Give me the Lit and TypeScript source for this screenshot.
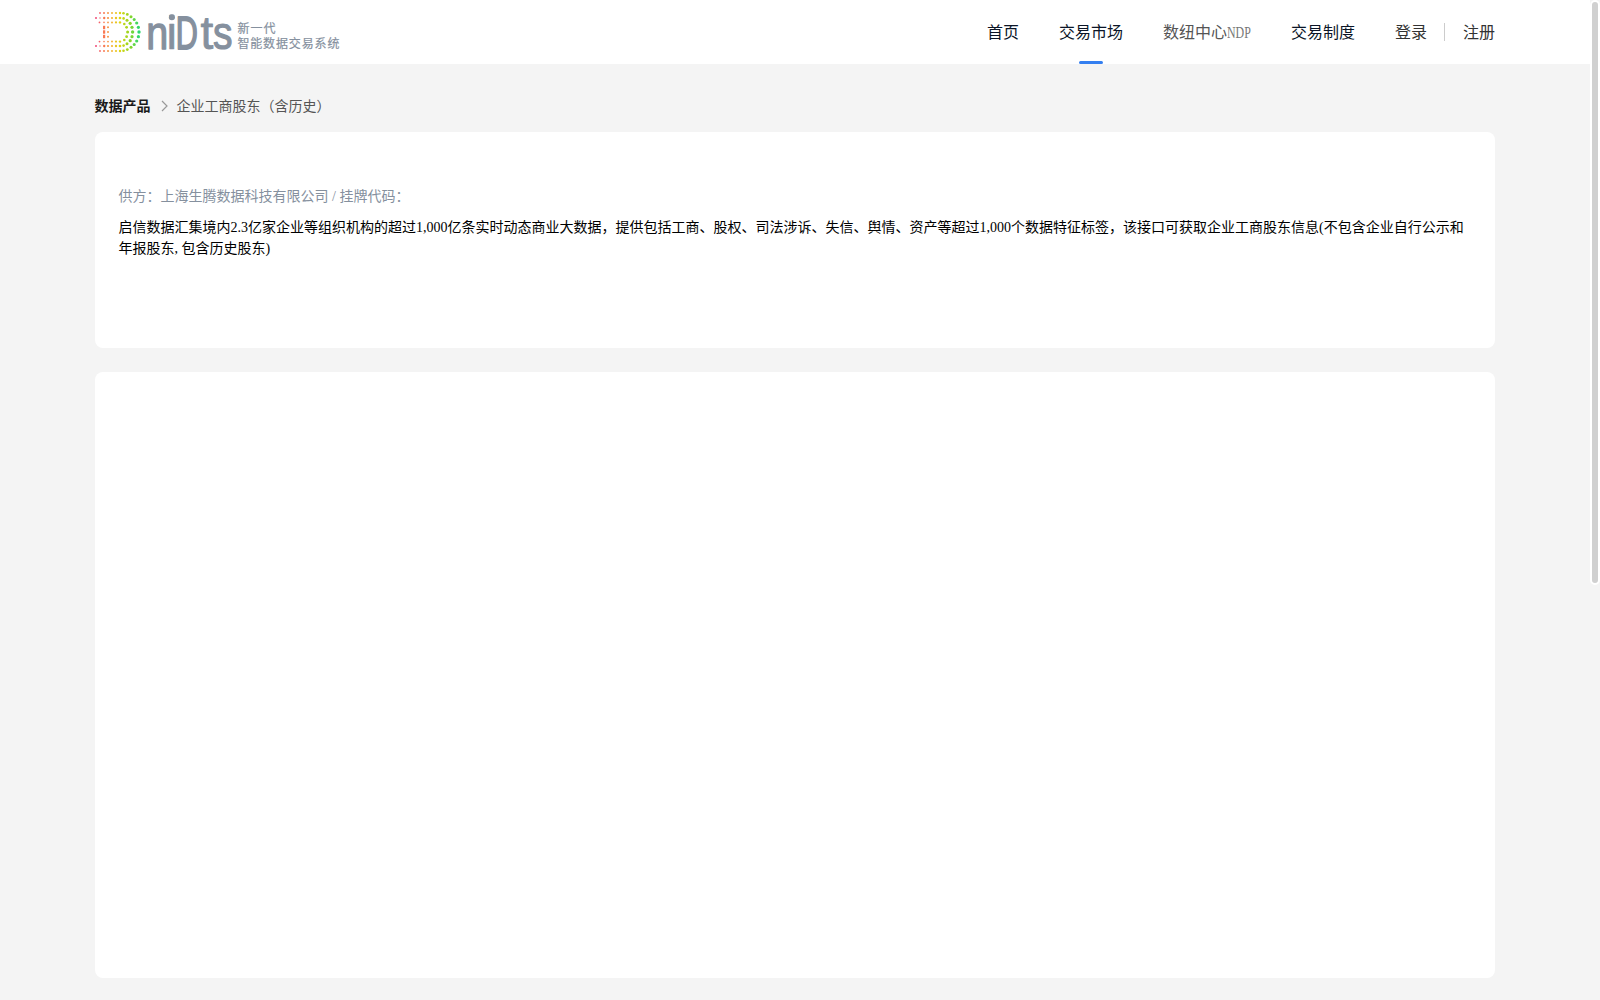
import { LitElement, html, css, svg } from "lit";
import { customElement } from "lit/decorators.js";

const STOPS: [number, number[]][] = [
  [0, [240, 70, 125]],
  [9, [248, 122, 85]],
  [17, [245, 180, 50]],
  [25, [222, 214, 20]],
  [34, [150, 214, 30]],
  [44, [45, 215, 110]],
];

function colorAt(x: number): string {
  for (let i = 1; i < STOPS.length; i++) {
    const [x1, c1] = STOPS[i];
    const [x0, c0] = STOPS[i - 1];
    if (x <= x1) {
      const t = Math.max(0, (x - x0) / (x1 - x0));
      return `rgb(${c0.map((c, k) => Math.round(c + (c1[k] - c) * t)).join(",")})`;
    }
  }
  return "rgb(45,215,110)";
}

// Upper half of the mark as [x, y, radius]; the lower half mirrors it about y = 20.
const UPPER: [number, number, number][] = [
  [5, 1, 0.9], [9, 1, 1], [13, 1, 1], [17, 1, 1], [21, 1, 1.1], [25, 1, 1.2], [28.5, 1.3, 1.3],
  [32.3, 2.4, 1.4], [36, 4.7, 1.5], [39.2, 7.4, 1.5], [41.7, 11, 1.6], [43.4, 15.3, 1.6],
  [1, 6, 1], [5, 6, 0.7], [9.2, 6, 1.2], [13, 6, 1.1], [17, 6, 1.1], [21, 6, 1.2], [25, 6, 1.3],
  [28.6, 6.4, 1.3], [32, 8.2, 1.5], [35.2, 11.3, 1.6], [37, 15.3, 1.6],
  [4.5, 10.4, 0.9], [9, 10.4, 0.8], [13, 10.4, 0.9], [17, 10.4, 1], [21, 10.4, 1.1], [25, 10.4, 1.2],
  [29.3, 12, 1.3], [31.6, 15.3, 1.4],
  [13, 15.3, 1],
];
const AXIS: [number, number, number][] = [[13, 20, 1], [32.6, 20, 1.5], [37.6, 20, 1.7], [44, 20, 1.7]];

function logoDots() {
  const all = [...UPPER, ...UPPER.map(([x, y, r]) => [x, 40 - y, r] as [number, number, number]), ...AXIS];
  return all.map(([x, y, r]) => svg`<circle cx=${x} cy=${y} r=${r} fill=${colorAt(x)}></circle>`);
}

// Letter, left edge, horizontal scale, stroke width.
const LETTERS: [string, number, number, number][] = [
  ["n", 51.3, 0.84, 1.3],
  ["i", 71.6, 1, 0.6],
  ["D", 80.8, 0.65, 1.8],
  ["t", 105.4, 0.98, 0.8],
  ["s", 118, 0.83, 1.2],
];

@customElement("site-logo")
export class SiteLogo extends LitElement {
  static styles = css`
    :host { display: block; width: 246px; height: 44px; }
    svg { display: block; overflow: visible; }
    .word { font: 47px "Liberation Sans", sans-serif; fill: #85909e; stroke: #85909e; stroke-linejoin: round; }
    .tag { font: 400 12px "Noto Sans CJK SC", sans-serif; fill: #85909e; stroke: #85909e; stroke-width: 0.2; }
  `;
  render() {
    return html`<svg width="246" height="44" viewBox="0 0 246 44">
      <g>
        ${logoDots()}
        <rect x="8" y="13.8" width="2.2" height="3.4" fill=${colorAt(9)}></rect>
        <rect x="8" y="18.3" width="2.2" height="3.4" fill=${colorAt(9)}></rect>
        <rect x="8" y="22.8" width="2.2" height="3.4" fill=${colorAt(9)}></rect>
      </g>
      <g class="word">
        ${LETTERS.map(([ch, x, sx, w]) => svg`<text transform="translate(${x} 37.3) scale(${sx} 1)" stroke-width=${w}>${ch}</text>`)}
        <circle cx="76.9" cy="5.3" r="3" stroke="none"></circle>
      </g>
      <text class="tag" x="142.4" y="21" textLength="38">新一代</text>
      <text class="tag" x="142.4" y="36" textLength="102">智能数据交易系统</text>
    </svg>`;
  }
}

@customElement("app-root")
export class AppRoot extends LitElement {
  static styles = css`
    :host {
      display: block; position: relative; height: 1000px; overflow: hidden; background: #f4f4f4;
      font-family: "Liberation Serif", "Noto Sans CJK SC", serif; font-size: 14px; color: #000;
    }
    .header { height: 64px; margin-right: 10px; background: #fff; box-sizing: border-box; padding: 0 95px; display: flex; justify-content: space-between; }
    .brand { padding-top: 12px; }
    .nav { display: flex; font-size: 16px; line-height: 65px; height: 64px; gap: 40px; color: #0b1527; white-space: nowrap; }
    .item { position: relative; }
    .active::after { content: ""; position: absolute; left: 50%; bottom: 0; width: 24px; height: 3px; margin-left: -12px; border-radius: 2px; background: #347ff0; }
    .muted { color: #555; display: flex; width: 88px; }
    .ndp { font-size: 17px; transform: scaleX(0.7); transform-origin: left; color: #777; }
    .auth { display: flex; align-items: center; color: #333; }
    .rule { width: 1px; height: 18px; background: #ccc; margin: 0 18px 0 17px; }
    .main { width: 1400px; margin-left: 95px; }
    .crumbs { display: flex; align-items: center; height: 20px; padding: 31px 0 17px; color: #555; }
    .crumbs b { color: #1a1a1a; margin-left: -0.5px; }
    .chevron { margin: 1px 9px 0 10px; width: 7px; height: 12px; }
    .card { background: #fff; border-radius: 8px; box-sizing: border-box; }
    .info { height: 216px; padding: 54px 24px 0 23.5px; }
    .detail { height: 606px; margin-top: 24px; }
    .supplier { margin: 0; line-height: 21px; color: #85909e; }
    .desc { margin: 10px 0 0; line-height: 21px; }
    .scroll { position: absolute; right: 0; top: 0; width: 10px; height: 585px; box-sizing: border-box; border: 2px solid #fff; border-radius: 5px; background: #d0d0d0; }
  `;
  render() {
    return html`
      <div class="header">
        <site-logo class="brand"></site-logo>
        <div class="nav">
          <span class="item">首页</span>
          <span class="item active">交易市场</span>
          <span class="muted">数纽中心<span class="ndp">NDP</span></span>
          <span class="item">交易制度</span>
          <div class="auth"><span>登录</span><i class="rule"></i><span>注册</span></div>
        </div>
      </div>
      <div class="main">
        <div class="crumbs"><b>数据产品</b>
          <svg class="chevron" viewBox="0 0 7 12"><path d="M1 1l5 5-5 5" fill="none" stroke="#999" stroke-width="1.2"></path></svg>
          <span>企业工商股东（含历史）</span></div>
        <div class="card info">
          <p class="supplier">供方：上海生腾数据科技有限公司 / 挂牌代码：</p>
          <p class="desc">启信数据汇集境内2.3亿家企业等组织机构的超过1,000亿条实时动态商业大数据，提供包括工商、股权、司法涉诉、失信、舆情、资产等超过1,000个数据特征标签，该接口可获取企业工商股东信息(不包含企业自行公示和年报股东, 包含历史股东)</p>
        </div>
        <div class="card detail"></div>
      </div>
      <div class="scroll"></div>`;
  }
}
